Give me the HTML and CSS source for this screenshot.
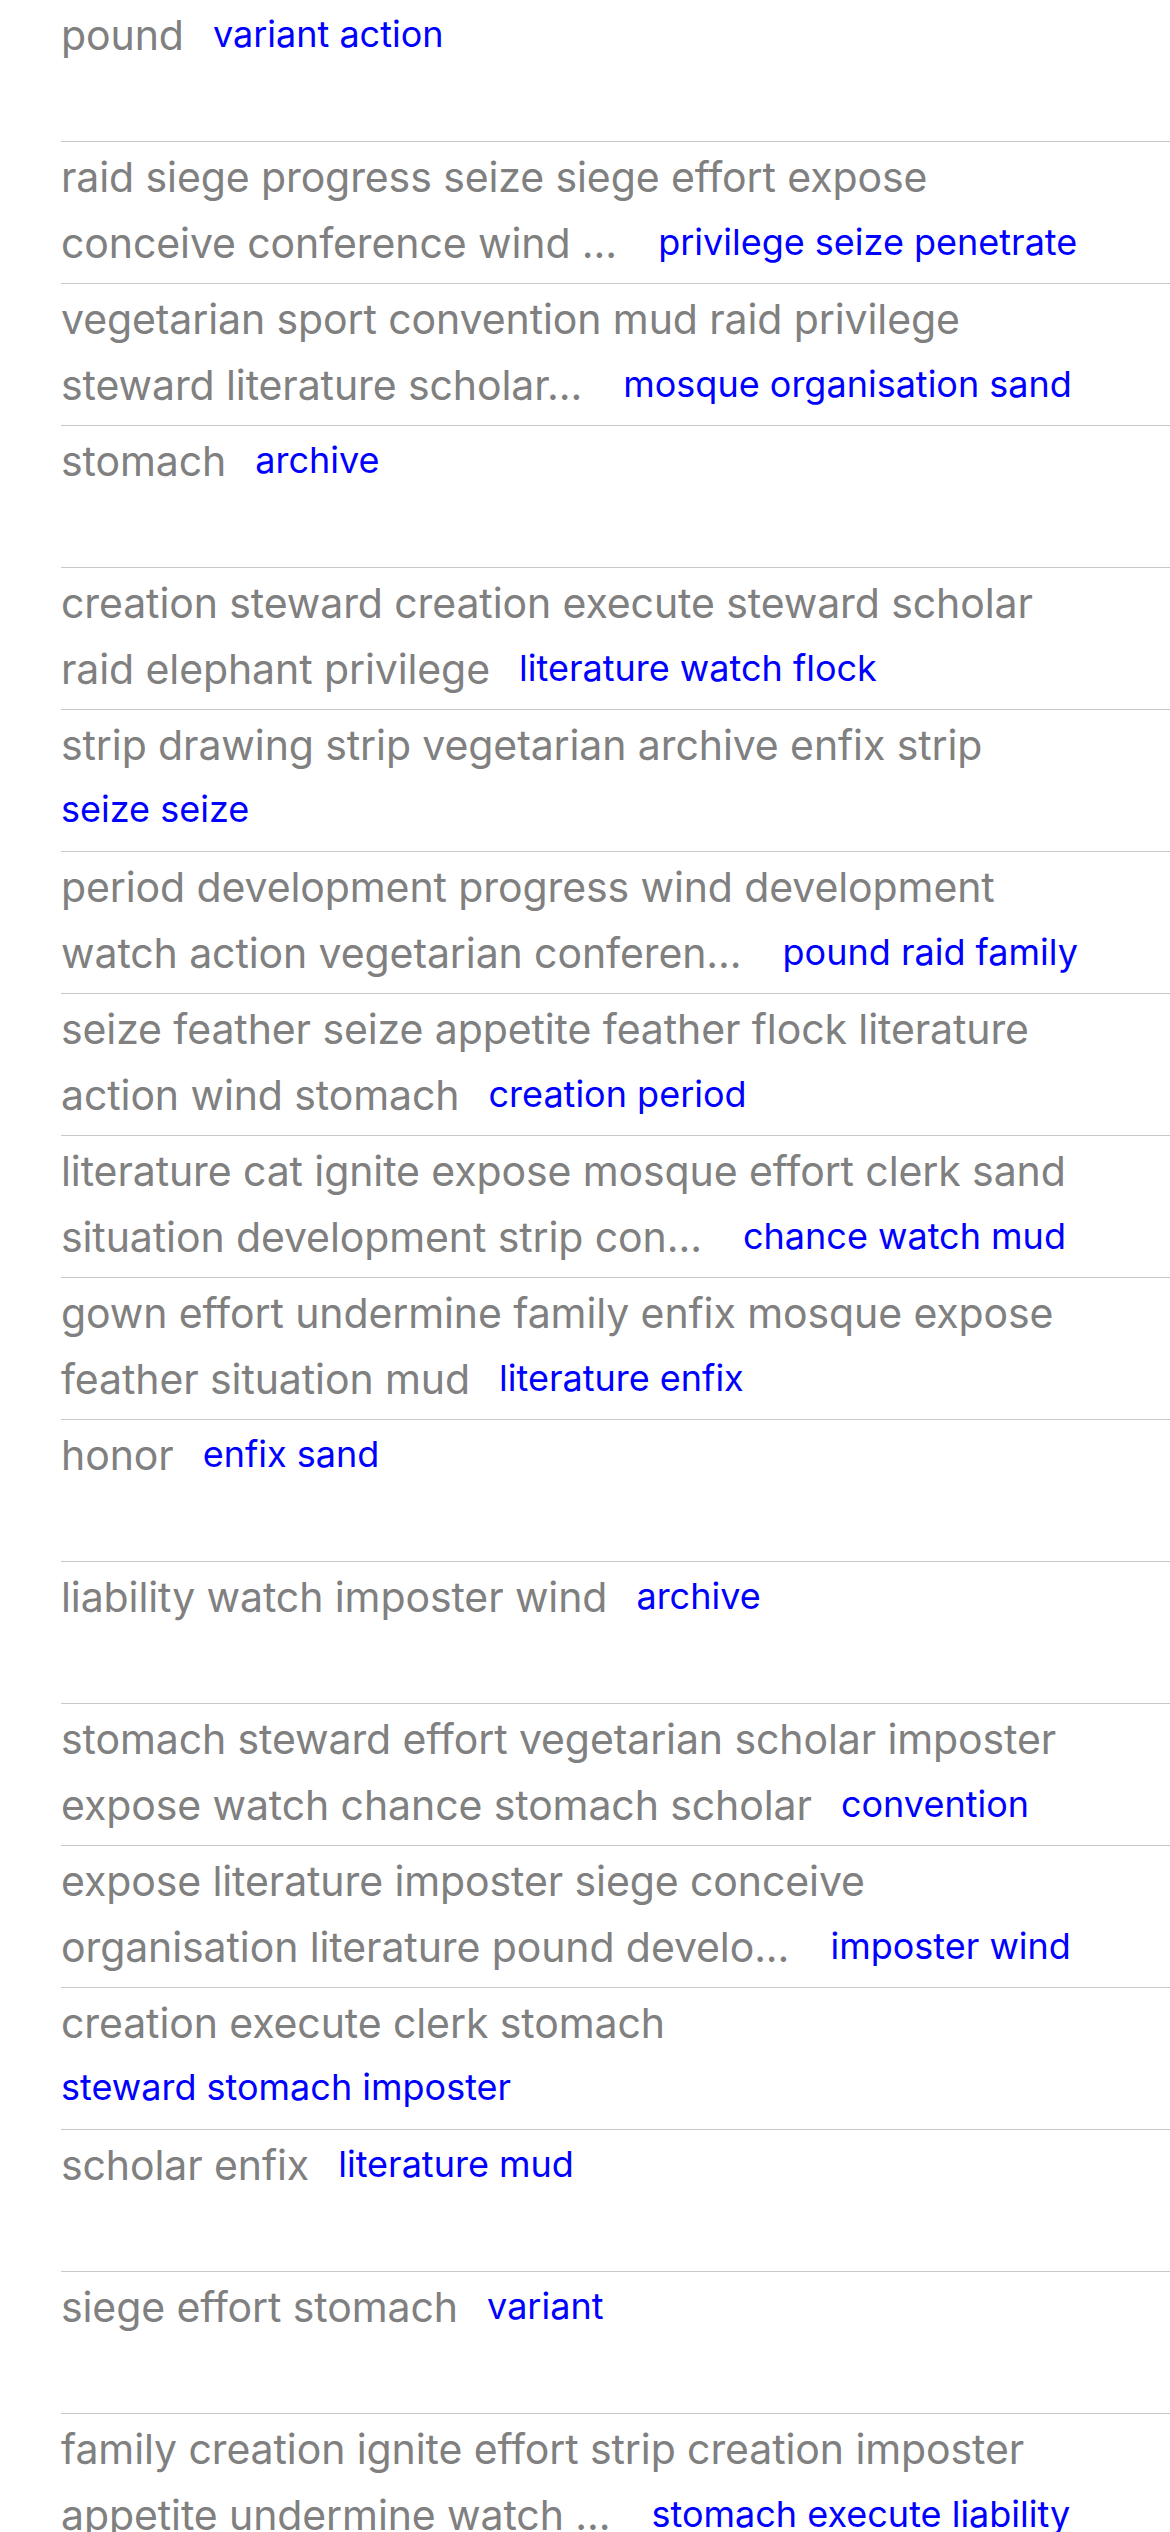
FILE: index.html
```html
<!DOCTYPE html>
<html lang="en">
<head>
<meta charset="utf-8">
<title>List</title>
<link rel="stylesheet" href="styles.css">
</head>
<body>
<ul class="list">
  <li class="item"><p class="entry"><span class="title">pound</span> <a class="tag">variant action</a></p></li>
  <li class="item"><p class="entry"><span class="title title--clipped">raid siege progress seize siege effort expose<br>conceive conference wind ...</span> <a class="tag">privilege seize penetrate</a></p></li>
  <li class="item"><p class="entry"><span class="title title--clipped">vegetarian sport convention mud raid privilege<br>steward literature scholar...</span> <a class="tag">mosque organisation sand</a></p></li>
  <li class="item"><p class="entry"><span class="title">stomach</span> <a class="tag">archive</a></p></li>
  <li class="item"><p class="entry"><span class="title">creation steward creation execute steward scholar<br>raid elephant privilege</span> <a class="tag">literature watch flock</a></p></li>
  <li class="item"><p class="entry"><span class="title">strip drawing strip vegetarian archive enfix strip</span> <a class="tag">seize seize</a></p></li>
  <li class="item"><p class="entry"><span class="title title--clipped">period development progress wind development<br>watch action vegetarian conferen...</span> <a class="tag">pound raid family</a></p></li>
  <li class="item"><p class="entry"><span class="title">seize feather seize appetite feather flock literature<br>action wind stomach</span> <a class="tag">creation period</a></p></li>
  <li class="item"><p class="entry"><span class="title title--clipped">literature cat ignite expose mosque effort clerk sand<br>situation development strip con...</span> <a class="tag">chance watch mud</a></p></li>
  <li class="item"><p class="entry"><span class="title">gown effort undermine family enfix mosque expose<br>feather situation mud</span> <a class="tag">literature enfix</a></p></li>
  <li class="item"><p class="entry"><span class="title">honor</span> <a class="tag">enfix sand</a></p></li>
  <li class="item"><p class="entry"><span class="title">liability watch imposter wind</span> <a class="tag">archive</a></p></li>
  <li class="item"><p class="entry"><span class="title">stomach steward effort vegetarian scholar imposter<br>expose watch chance stomach scholar</span> <a class="tag">convention</a></p></li>
  <li class="item"><p class="entry"><span class="title title--clipped">expose literature imposter siege conceive<br>organisation literature pound develo...</span> <a class="tag">imposter wind</a></p></li>
  <li class="item"><p class="entry"><span class="title">creation execute clerk stomach</span> <a class="tag">steward stomach imposter</a></p></li>
  <li class="item"><p class="entry"><span class="title">scholar enfix</span> <a class="tag">literature mud</a></p></li>
  <li class="item"><p class="entry"><span class="title">siege effort stomach</span> <a class="tag">variant</a></p></li>
  <li class="item"><p class="entry"><span class="title title--clipped">family creation ignite effort strip creation imposter<br>appetite undermine watch ...</span> <a class="tag">stomach execute liability</a></p></li>
</ul>
</body>
</html>
```

FILE: styles.css
```css
html, body {
  margin: 0;
  padding: 0;
  background: #ffffff;
}

body {
  font-family: Inter, "Noto Sans", "Liberation Sans", sans-serif;
  height: 2532px;
  overflow: hidden;
}

.list {
  list-style: none;
  margin: 0;
  padding: 0 0 0 61px;
}

.item {
  height: 141px;
  border-bottom: 1px solid #c8c8c8;
  padding-right: 48px;
}

.entry {
  margin: 0;
  padding-top: 2px;
  font-size: 36px;
  line-height: 62px;
}

.title {
  font-size: 41px;
  line-height: 66px;
  letter-spacing: -0.1px;
  color: #808080;
  margin-right: 19px;
}

.title--clipped {
  margin-right: 31px;
}

.tag {
  color: #0000ff;
  vertical-align: 3px;
  white-space: nowrap;
}
```
